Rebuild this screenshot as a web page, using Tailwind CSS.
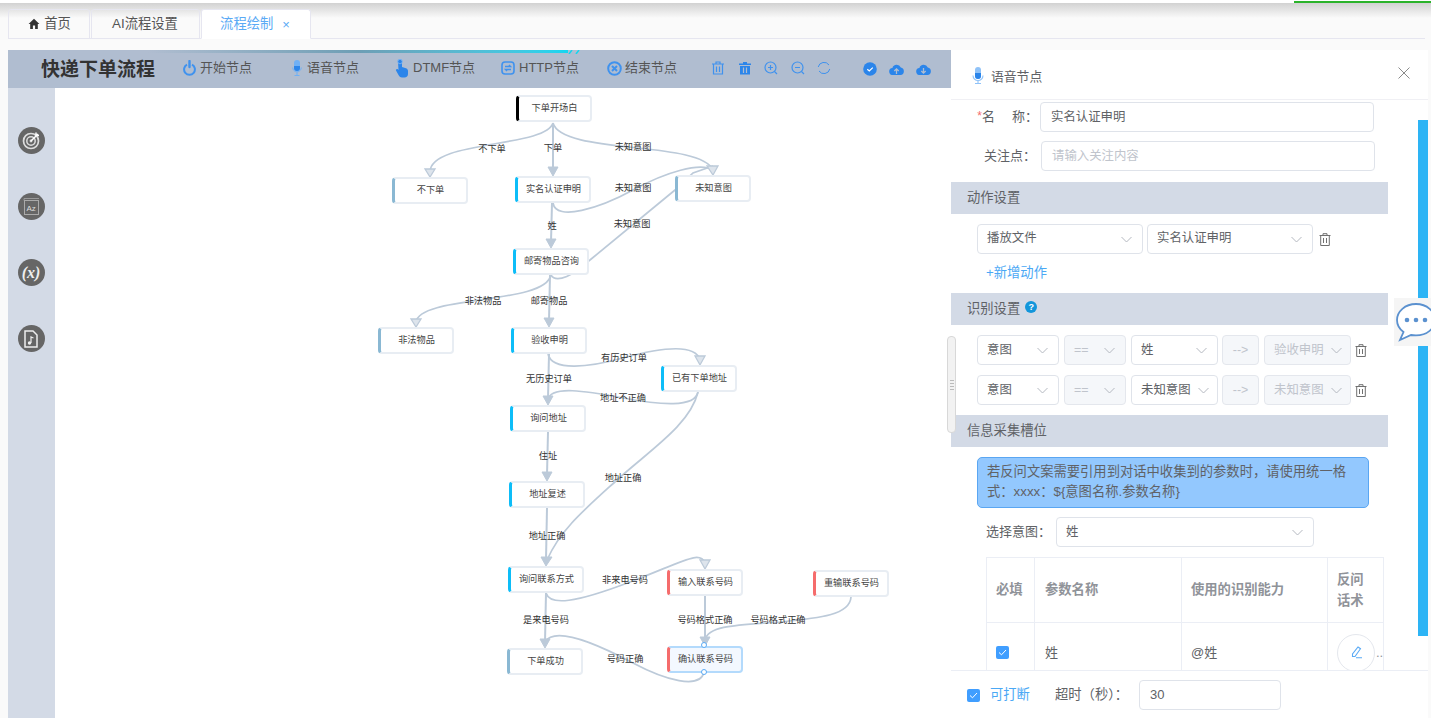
<!DOCTYPE html>
<html lang="zh-CN">
<head>
    <meta charset="UTF-8">
    <title>流程绘制</title>
    <script src="https://cdn.jsdelivr.net/npm/@tailwindcss/browser@4"></script>
</head>
<body class="bg-[#fafafa] h-[718px] w-[1431px] overflow-hidden relative font-['Liberation_Sans','Noto_Sans_CJK_SC',sans-serif] text-[#606266]">
    <!-- top shadow and loading bar -->
    <div class="h-[15px] bg-gradient-to-b from-[#d2d2d2] to-[#fafafa] absolute top-[3px] left-0 right-0"></div>
    <div class="h-[3px] bg-white absolute top-0 left-0 right-0"></div>
    <div class="h-[2px] w-[137px] bg-[#2bb32b] absolute top-[1px] right-0"></div>

    <!-- tabs -->
    <div class="relative h-[39px] pt-[9px] pl-[8px] pr-[6px]">
        <div class="flex h-[30px] border-b border-[#e6e6f0] gap-[1px] text-[13.3px]">
            <div class="w-[82px] h-[30px] border border-[#e6e6f0] rounded-t-[3px] flex items-center justify-center gap-[4px] text-[#555] pl-[1px]">
                <svg width="12" height="12" viewBox="0 0 12 12"><path d="M6 .8 .6 6h1.600v5h2.700V7.600h2.200V11h2.700V6h1.600z" fill="#333"/></svg>
                <span>首页</span>
            </div>
            <div class="w-[109px] h-[30px] border border-[#e6e6f0] rounded-t-[3px] flex items-center justify-center text-[#555] pr-[1px]">AI流程设置</div>
            <div class="w-[110px] h-[30px] border border-[#e6e6f0] border-b-white bg-white rounded-t-[3px] flex items-center justify-center gap-[9px] text-[#5aaaf5] pr-[2px]">
                <span>流程绘制</span><span class="text-[13px] leading-none">×</span>
            </div>
        </div>
    </div>

    <!-- main -->
    <div class="flex pl-[8px] pt-[11px] h-[679px]">
        <!-- flow editor -->
        <div class="w-[943px] flex flex-col relative">
            <div class="absolute top-0 left-[140px] w-[420px] h-[3px] bg-gradient-to-r from-[#b0bdd0] via-[#6d9eb5] to-[#12d6f0]"></div>
            <svg class="absolute top-0 left-[560px]" width="14" height="4"><path d="M1 4 4 0M8 4l3-4" stroke="#12d6f0" stroke-width="1.500"/></svg>
            <div class="h-[38px] bg-[#b0bdd0] flex items-center text-[13px] text-[#555] shrink-0 pb-[2px]">
                <div class="ml-[33px] w-[142px] text-[19px] font-bold text-[#333] leading-none mt-[2px]">快递下单流程</div>
                <div class="flex items-center gap-[4px] w-[107px]">
                    <svg width="13" height="16" viewBox="0 0 13 16"><path d="M4 4.600a5.400 5.400 0 1 0 5 0" fill="none" stroke="#3f92ee" stroke-width="2"/><path d="M6.500 1v6" stroke="#3f92ee" stroke-width="2.400" stroke-linecap="round"/></svg>
                    <span>开始节点</span>
                </div>
                <div class="flex items-center gap-[5px] w-[105px] pl-[2px]">
                    <svg width="10" height="18" viewBox="0 0 10 18"><rect x="2" y="1" width="6" height="11" rx="3" fill="#6fb0f5"/><path d="M2 7h6v2a3 3 0 0 1-6 0z" fill="#2b85ea"/><path d="M.7 8.500a4.300 4.300 0 0 0 8.600 0M5 13v3M2.500 16.500h5" fill="none" stroke="#6fb0f5" stroke-width="1"/></svg>
                    <span>语音节点</span>
                </div>
                <div class="flex items-center gap-[4px] w-[106px]">
                    <svg width="14" height="19" viewBox="0 0 14 19"><path d="M3 2.500a2 2 0 0 1 4 0V8l4 1.200c1.500.5 2 1.500 2 3V15c0 2-1.400 3.500-3.500 3.500H7c-1.500 0-2.500-.7-3.200-2L1 11.500c-.5-1 .8-2 1.800-1.200l.7.700z" fill="#2b85ea"/><circle cx="5" cy="2.500" r="2.300" fill="none" stroke="#6fb0f5"/></svg>
                    <span>DTMF节点</span>
                </div>
                <div class="flex items-center gap-[4px] w-[106px]">
                    <svg width="14" height="14" viewBox="0 0 14 14"><rect x="1" y="1" width="12" height="12" rx="3" fill="none" stroke="#3f92ee" stroke-width="1.600"/><path d="M4 5.500h5.500L8 4M10 8.500H4.500L6 10" fill="none" stroke="#3f92ee" stroke-width="1.400"/></svg>
                    <span>HTTP节点</span>
                </div>
                <div class="flex items-center gap-[3px] w-[105px]">
                    <svg width="15" height="15" viewBox="0 0 15 15"><circle cx="7.500" cy="7.500" r="6.300" fill="none" stroke="#3f92ee" stroke-width="2"/><path d="m5 5 5 5m0-5-5 5" stroke="#3f92ee" stroke-width="2"/></svg>
                    <span>结束节点</span>
                </div>
                <div class="flex items-center gap-[12.500px] ml-[-1px]">
                    <svg width="14" height="14" viewBox="0 0 14 14"><path d="M1 3h12M5 3V1h4v2M2.500 3v10h9V3M5.500 5.500V11M8.500 5.500V11" fill="none" stroke="#3f92ee" stroke-width="1.200"/></svg>
                    <svg width="14" height="14" viewBox="0 0 14 14"><path d="M5 1h4v1.500h4V4H1V2.500h4zM2 5h10v8.500H2z" fill="#2b85ea"/><path d="M5.500 6.500V12M8.500 6.500V12" stroke="#b0bdd0" stroke-width="1.200"/></svg>
                    <svg width="14" height="14" viewBox="0 0 14 14"><circle cx="6.500" cy="6.500" r="5.500" fill="none" stroke="#3f92ee" stroke-width="1.200"/><path d="M4 6.500h5M6.500 4v5M10.500 10.500 13 13" stroke="#3f92ee" stroke-width="1.200"/></svg>
                    <svg width="14" height="14" viewBox="0 0 14 14"><circle cx="6.500" cy="6.500" r="5.500" fill="none" stroke="#3f92ee" stroke-width="1.200"/><path d="M4 6.500h5M10.500 10.500 13 13" stroke="#3f92ee" stroke-width="1.200"/></svg>
                    <svg width="14" height="14" viewBox="0 0 14 14"><path d="M1.200 6A6 6 0 0 1 12 4M12.800 8A6 6 0 0 1 2 10" fill="none" stroke="#3f92ee" stroke-width="1"/></svg>
                </div>
                <div class="flex items-center gap-[12px] ml-[32px] mt-[2px]">
                    <svg width="14" height="14" viewBox="0 0 14 14"><circle cx="7" cy="7" r="6.800" fill="#2b85ea"/><path d="m4.300 7.200 2 1.800 3.500-3.400" fill="none" stroke="#fff" stroke-width="1.200"/></svg>
                    <svg width="15" height="11" viewBox="0 0 15 11"><path d="M4 11a3.500 3.500 0 0 1-.6-7A4.500 4.500 0 0 1 11.800 3.500 3.800 3.800 0 0 1 11.500 11z" fill="#2b85ea"/><path d="M7.500 10V5.500M5.300 7l2.200-2.200L9.700 7" fill="none" stroke="#b0bdd0" stroke-width="1.300"/></svg>
                    <svg width="15" height="11" viewBox="0 0 15 11"><path d="M4 11a3.500 3.500 0 0 1-.6-7A4.500 4.500 0 0 1 11.800 3.500 3.800 3.800 0 0 1 11.500 11z" fill="#2b85ea"/><path d="M7.500 4v4.500M5.300 7l2.200 2.200L9.700 7" fill="none" stroke="#b0bdd0" stroke-width="1.300"/></svg>
                </div>
            </div>
            <div class="flex flex-1 min-h-0">
                <!-- left rail -->
                <div class="w-[47px] bg-[#d3dae6] shrink-0 flex flex-col items-center pt-[39px] gap-[39px] pr-[1px]">
                    <div class="w-[27px] h-[27px] rounded-full bg-[#666] flex items-center justify-center">
                        <svg width="19" height="19" viewBox="0 0 19 19"><circle cx="9" cy="10" r="7.500" fill="none" stroke="#ddd" stroke-width="1.700"/><circle cx="9" cy="10" r="4.200" fill="none" stroke="#ddd" stroke-width="1.500"/><circle cx="9" cy="10" r="1.400" fill="#ddd"/><path d="M9 10 16 3M14 1.500V4.500H17" fill="none" stroke="#fff" stroke-width="1.500"/></svg>
                    </div>
                    <div class="w-[27px] h-[27px] rounded-full bg-[#666] flex items-center justify-center">
                        <svg width="17" height="19" viewBox="0 0 17 19"><path d="M1 3.500V1.500h15" fill="none" stroke="#999" stroke-width="1"/><rect x="1.500" y="3.500" width="14" height="14" fill="none" stroke="#aaa" stroke-width="1"/><text x="3.500" y="13.500" font-size="8" fill="#ddd">Az</text></svg>
                    </div>
                    <div class="w-[27px] h-[27px] rounded-full bg-[#666] flex items-center justify-center text-[#eee] text-[16px] font-bold italic font-['Liberation_Serif',serif] leading-none">(x)</div>
                    <div class="w-[27px] h-[27px] rounded-full bg-[#666] flex items-center justify-center">
                        <svg width="14" height="18" viewBox="0 0 14 18"><path d="M1 1h8l4 4v12H1z" fill="none" stroke="#eee" stroke-width="1.500"/><path d="M7 13V7l2.500 1" fill="none" stroke="#eee" stroke-width="1.200"/><circle cx="5.500" cy="13" r="1.700" fill="#eee"/></svg>
                    </div>
                </div>
                <!-- canvas: nodes are placed on a free canvas -->
                <div class="relative flex-1 bg-white overflow-hidden">
                    <svg class="absolute left-0 top-0" width="896" height="630" viewBox="55 88 896 630" fill="none" stroke="#bccad9" stroke-width="1.700">
                        <path d="M553 123C545 148 430 140 430 172"/>
                        <path d="M553 123V170" stroke-width="2"/>
                        <path d="M553 123C562 155 700 140 713 170"/>
                        <path d="M553 203C556 222 600 208 633 190S700 162 713 170"/>
                        <path d="M551 275C556 284 575 275 590 260L675 190 693 173 713 166"/>
                        <path d="M552 203 551 242" stroke-width="2"/>
                        <path d="M551 275C545 305 420 295 416 322"/>
                        <path d="M550 275 549 321" stroke-width="2"/>
                        <path d="M549 354 548 399" stroke-width="2"/>
                        <path d="M548 354C552 372 590 367 623 358S695 342 700 360"/>
                        <path d="M698 392C695 408 660 405 623 398S550 385 548 400"/>
                        <path d="M698 392C690 425 650 450 617 480S560 530 547 560"/>
                        <path d="M548 432 547 475" stroke-width="2"/>
                        <path d="M547 508 546 560" stroke-width="2"/>
                        <path d="M546 593C550 606 575 603 630 582S700 550 705 563"/>
                        <path d="M546 593 545 642" stroke-width="2"/>
                        <path d="M705 596V640" stroke-width="2"/>
                        <path d="M851 597C850 615 820 618 780 622 740 625 708 625 705 640"/>
                        <path d="M704 672C700 690 665 680 633 663S555 625 545 642"/>
                        <g fill="#dde4ec" stroke-width="1.300">
                            <path d="M425 169H435L430 177Z"/>
                            <path d="M707 166H718L713 175Z"/>
                            <path d="M411 319H421L416 327Z"/>
                            <path d="M695 356H705L700 365Z"/>
                            <path d="M700 560H710L705 569Z"/>
                        </g>
                        <g fill="#bccad9" stroke-width="1">
                            <path d="M548 167H558L553 176Z"/>
                            <path d="M546 239H556L551 248Z"/>
                            <path d="M544 318H554L549 327Z"/>
                            <path d="M543 396H553L548 405Z"/>
                            <path d="M542 472H552L547 481Z"/>
                            <path d="M541 557H552L546 566Z"/>
                            <path d="M540 639H550L545 648Z"/>
                            <path d="M700 637H710L705 646Z"/>
                        </g>
                    </svg>

                    <!-- nodes -->
                    <div class="absolute left-[461px] top-[7px] w-[76px] h-[27px] bg-white border-2 border-[#e8edf3] border-l-[3px] border-l-black rounded-[4px] flex items-center justify-center text-[9.200px] text-[#444]">下单开场白</div>
                    <div class="absolute left-[337px] top-[89px] w-[76px] h-[27px] bg-white border-2 border-[#e8edf3] border-l-[3px] border-l-[#8ab8d3] rounded-[4px] flex items-center justify-center text-[9.200px] text-[#444]">不下单</div>
                    <div class="absolute left-[460px] top-[88px] w-[76px] h-[27px] bg-white border-2 border-[#e8edf3] border-l-[3px] border-l-[#0dbdf8] rounded-[4px] flex items-center justify-center text-[9.200px] text-[#444]">实名认证申明</div>
                    <div class="absolute left-[620px] top-[87px] w-[76px] h-[27px] bg-white border-2 border-[#e8edf3] border-l-[3px] border-l-[#8ab8d3] rounded-[4px] flex items-center justify-center text-[9.200px] text-[#444]">未知意图</div>
                    <div class="absolute left-[458px] top-[160px] w-[76px] h-[27px] bg-white border-2 border-[#e8edf3] border-l-[3px] border-l-[#0dbdf8] rounded-[4px] flex items-center justify-center text-[9.200px] text-[#444]">邮寄物品咨询</div>
                    <div class="absolute left-[323px] top-[239px] w-[76px] h-[27px] bg-white border-2 border-[#e8edf3] border-l-[3px] border-l-[#8ab8d3] rounded-[4px] flex items-center justify-center text-[9.200px] text-[#444]">非法物品</div>
                    <div class="absolute left-[456px] top-[239px] w-[76px] h-[27px] bg-white border-2 border-[#e8edf3] border-l-[3px] border-l-[#0dbdf8] rounded-[4px] flex items-center justify-center text-[9.200px] text-[#444]">验收申明</div>
                    <div class="absolute left-[606px] top-[277px] w-[76px] h-[27px] bg-white border-2 border-[#e8edf3] border-l-[3px] border-l-[#0dbdf8] rounded-[4px] flex items-center justify-center text-[9.200px] text-[#444]">已有下单地址</div>
                    <div class="absolute left-[455px] top-[317px] w-[76px] h-[27px] bg-white border-2 border-[#e8edf3] border-l-[3px] border-l-[#0dbdf8] rounded-[4px] flex items-center justify-center text-[9.200px] text-[#444]">询问地址</div>
                    <div class="absolute left-[454px] top-[393px] w-[76px] h-[27px] bg-white border-2 border-[#e8edf3] border-l-[3px] border-l-[#0dbdf8] rounded-[4px] flex items-center justify-center text-[9.200px] text-[#444]">地址复述</div>
                    <div class="absolute left-[453px] top-[478px] w-[76px] h-[27px] bg-white border-2 border-[#e8edf3] border-l-[3px] border-l-[#0dbdf8] rounded-[4px] flex items-center justify-center text-[9.200px] text-[#444]">询问联系方式</div>
                    <div class="absolute left-[612px] top-[481px] w-[76px] h-[27px] bg-white border-2 border-[#e8edf3] border-l-[3px] border-l-[#f56c6c] rounded-[4px] flex items-center justify-center text-[9.200px] text-[#444]">输入联系号码</div>
                    <div class="absolute left-[758px] top-[482px] w-[76px] h-[27px] bg-white border-2 border-[#e8edf3] border-l-[3px] border-l-[#f56c6c] rounded-[4px] flex items-center justify-center text-[9.200px] text-[#444]">重输联系号码</div>
                    <div class="absolute left-[452px] top-[560px] w-[76px] h-[27px] bg-white border-2 border-[#e8edf3] border-l-[3px] border-l-[#8ab8d3] rounded-[4px] flex items-center justify-center text-[9.200px] text-[#444]">下单成功</div>
                    <div class="absolute left-[612px] top-[558px] w-[76px] h-[27px] bg-[#f3f8ff] border-2 border-[#b3dafc] border-l-[3px] border-l-[#f56c6c] rounded-[4px] flex items-center justify-center text-[9.200px] text-[#444]">确认联系号码</div>
                    <div class="absolute left-[646px] top-[554px] w-[6px] h-[6px] rounded-full bg-white border border-[#5aaaf5]"></div>
                    <div class="absolute left-[646px] top-[581px] w-[6px] h-[6px] rounded-full bg-white border border-[#5aaaf5]"></div>

                    <!-- edge labels -->
                    <div class="absolute left-0 top-[1px] w-full h-full">
                    <span class="absolute left-[437px] top-[61px] -translate-x-1/2 -translate-y-1/2 text-[9.200px] text-[#333] whitespace-nowrap">不下单</span>
                    <span class="absolute left-[498px] top-[60px] -translate-x-1/2 -translate-y-1/2 text-[9.200px] text-[#333] whitespace-nowrap">下单</span>
                    <span class="absolute left-[578px] top-[59px] -translate-x-1/2 -translate-y-1/2 text-[9.200px] text-[#333] whitespace-nowrap">未知意图</span>
                    <span class="absolute left-[578px] top-[100px] -translate-x-1/2 -translate-y-1/2 text-[9.200px] text-[#333] whitespace-nowrap">未知意图</span>
                    <span class="absolute left-[577px] top-[136px] -translate-x-1/2 -translate-y-1/2 text-[9.200px] text-[#333] whitespace-nowrap">未知意图</span>
                    <span class="absolute left-[497px] top-[138px] -translate-x-1/2 -translate-y-1/2 text-[9.200px] text-[#333] whitespace-nowrap">姓</span>
                    <span class="absolute left-[428px] top-[213px] -translate-x-1/2 -translate-y-1/2 text-[9.200px] text-[#333] whitespace-nowrap">非法物品</span>
                    <span class="absolute left-[494px] top-[213px] -translate-x-1/2 -translate-y-1/2 text-[9.200px] text-[#333] whitespace-nowrap">邮寄物品</span>
                    <span class="absolute left-[569px] top-[270px] -translate-x-1/2 -translate-y-1/2 text-[9.200px] text-[#333] whitespace-nowrap">有历史订单</span>
                    <span class="absolute left-[494px] top-[291px] -translate-x-1/2 -translate-y-1/2 text-[9.200px] text-[#333] whitespace-nowrap">无历史订单</span>
                    <span class="absolute left-[568px] top-[310px] -translate-x-1/2 -translate-y-1/2 text-[9.200px] text-[#333] whitespace-nowrap">地址不正确</span>
                    <span class="absolute left-[493px] top-[368px] -translate-x-1/2 -translate-y-1/2 text-[9.200px] text-[#333] whitespace-nowrap">住址</span>
                    <span class="absolute left-[568px] top-[390px] -translate-x-1/2 -translate-y-1/2 text-[9.200px] text-[#333] whitespace-nowrap">地址正确</span>
                    <span class="absolute left-[492px] top-[448px] -translate-x-1/2 -translate-y-1/2 text-[9.200px] text-[#333] whitespace-nowrap">地址正确</span>
                    <span class="absolute left-[570px] top-[492px] -translate-x-1/2 -translate-y-1/2 text-[9.200px] text-[#333] whitespace-nowrap">非来电号码</span>
                    <span class="absolute left-[491px] top-[532px] -translate-x-1/2 -translate-y-1/2 text-[9.200px] text-[#333] whitespace-nowrap">是来电号码</span>
                    <span class="absolute left-[650px] top-[532px] -translate-x-1/2 -translate-y-1/2 text-[9.200px] text-[#333] whitespace-nowrap">号码格式正确</span>
                    <span class="absolute left-[723px] top-[532px] -translate-x-1/2 -translate-y-1/2 text-[9.200px] text-[#333] whitespace-nowrap">号码格式正确</span>
                    <span class="absolute left-[570px] top-[571px] -translate-x-1/2 -translate-y-1/2 text-[9.200px] text-[#333] whitespace-nowrap">号码正确</span>
                    </div>
                </div>
            </div>
        </div>

        <!-- node panel -->
        <div class="w-[477px] bg-white flex flex-col shrink-0 relative text-[12.400px]">
            <div class="h-[50px] border-b border-[#f0f0f4] flex items-center pl-[21px] relative shrink-0">
                <svg class="mt-[2px]" width="12" height="19" viewBox="0 0 12 19"><rect x="3" y="1" width="6" height="12" rx="3" fill="#8fc2f8"/><path d="M3 7h6v3a3 3 0 0 1-6 0z" fill="#2b85ea"/><path d="M1 9.500a5 5 0 0 0 10 0M6 14.500V17M3 17.500h6" fill="none" stroke="#8fc2f8" stroke-width="1.100"/></svg>
                <span class="ml-[7px] mt-[5px] text-[12.800px] text-[#606266]">语音节点</span>
                <svg class="absolute left-[447px] top-[17px]" width="12" height="12" viewBox="0 0 12 12"><path d="m.5.500 11 11m0-11-11 11" stroke="#8a8a8a" stroke-width="1"/></svg>
            </div>

            <div class="h-[570px] overflow-hidden relative shrink-0">
                <div class="flex items-center h-[30px] mt-[2px]">
                    <div class="w-[89px] flex justify-end pr-[2px] text-[#606266] text-[13px] leading-none pb-[2px]"><span class="text-[#f56c6c] text-[12px]">*</span>名<span class="w-[17px]"></span>称：</div>
                    <div class="w-[334px] h-[30px] border border-[#dfe3ea] rounded-[4px] flex items-center pl-[10px]">实名认证申明</div>
                </div>
                <div class="flex items-center h-[30px] mt-[9px]">
                    <div class="w-[90px] flex justify-end pr-[5px] text-[#606266] text-[13px] leading-none pb-[2px]">关注点：</div>
                    <div class="w-[334px] h-[30px] border border-[#dfe3ea] rounded-[4px] flex items-center pl-[10px] text-[#c0c4cc]">请输入关注内容</div>
                </div>

                <div class="w-[437px] h-[32px] mt-[11px] bg-[#d3dae6] flex items-center pl-[16px] pb-[1px] text-[13.300px] text-[#606266]">动作设置</div>
                <div class="flex items-center h-[30px] mt-[10px] ml-[26px] gap-[4px]">
                    <div class="w-[166px] h-[30px] border border-[#dfe3ea] rounded-[4px] flex items-center justify-between pl-[9px] pr-[10px]">
                        <span class="mb-[1px]">播放文件</span>
                        <svg width="11" height="7" viewBox="0 0 11 7"><path d="m.5 1 5 5 5-5" fill="none" stroke="#b4b8c0"/></svg>
                    </div>
                    <div class="w-[166px] h-[30px] border border-[#dfe3ea] rounded-[4px] flex items-center justify-between pl-[9px] pr-[10px]">
                        <span class="mb-[1px]">实名认证申明</span>
                        <svg width="11" height="7" viewBox="0 0 11 7"><path d="m.5 1 5 5 5-5" fill="none" stroke="#b4b8c0"/></svg>
                    </div>
                    <svg class="ml-[2px]" width="12" height="13" viewBox="0 0 12 13"><path d="M.5 2.500h11M4 2.500V.7h4v1.800M1.700 2.500v10h8.600v-10M4.500 5v5M7.500 5v5" fill="none" stroke="#707070"/></svg>
                </div>
                <div class="h-[19px] mt-[10px] ml-[35px] text-[13.300px] leading-[17px] text-[#4aa8f5]">+新增动作</div>

                <div class="w-[437px] h-[32px] mt-[10px] bg-[#d3dae6] flex items-center pl-[16px] text-[13.300px] text-[#606266] gap-[5px]">
                    <span>识别设置</span>
                    <span class="w-[12px] h-[12px] rounded-full bg-[#1296db] text-white text-[9px] leading-[12px] text-center font-bold mt-[-4px]">?</span>
                </div>
                <div class="flex items-center h-[30px] mt-[10px] ml-[26px]">
                    <div class="w-[82px] h-[30px] border border-[#dfe3ea] rounded-[4px] flex items-center justify-between pl-[9px] pr-[10px]">
                        <span>意图</span>
                        <svg width="11" height="7" viewBox="0 0 11 7"><path d="m.5 1 5 5 5-5" fill="none" stroke="#b4b8c0"/></svg>
                    </div>
                    <div class="w-[62px] h-[30px] ml-[5px] bg-[#f5f7fa] border border-[#e4e7ed] rounded-[4px] flex items-center justify-between pl-[9px] pr-[10px] text-[#c0c4cc]">
                        <span>==</span>
                        <svg width="11" height="7" viewBox="0 0 11 7"><path d="m.5 1 5 5 5-5" fill="none" stroke="#b4b8c0"/></svg>
                    </div>
                    <div class="w-[87px] h-[30px] ml-[5px] border border-[#dfe3ea] rounded-[4px] flex items-center justify-between pl-[9px] pr-[10px]">
                        <span>姓</span>
                        <svg width="11" height="7" viewBox="0 0 11 7"><path d="m.5 1 5 5 5-5" fill="none" stroke="#b4b8c0"/></svg>
                    </div>
                    <div class="w-[37px] h-[30px] ml-[4px] bg-[#f5f7fa] border border-[#e4e7ed] rounded-[4px] flex items-center justify-center text-[#c0c4cc]">--&gt;</div>
                    <div class="w-[87px] h-[30px] ml-[5px] bg-[#f5f7fa] border border-[#e4e7ed] rounded-[4px] flex items-center pl-[9px] pr-[8px] gap-[7px] text-[#c0c4cc]">
                        <span class="w-[50px] overflow-hidden whitespace-nowrap shrink-0">验收申明</span>
                        <svg class="shrink-0" width="11" height="7" viewBox="0 0 11 7"><path d="m.5 1 5 5 5-5" fill="none" stroke="#b4b8c0"/></svg>
                    </div>
                    <svg class="ml-[4px]" width="12" height="13" viewBox="0 0 12 13"><path d="M.5 2.500h11M4 2.500V.7h4v1.800M1.700 2.500v10h8.600v-10M4.500 5v5M7.500 5v5" fill="none" stroke="#707070"/></svg>
                </div>
                <div class="flex items-center h-[30px] mt-[10px] ml-[26px]">
                    <div class="w-[82px] h-[30px] border border-[#dfe3ea] rounded-[4px] flex items-center justify-between pl-[9px] pr-[10px]">
                        <span>意图</span>
                        <svg width="11" height="7" viewBox="0 0 11 7"><path d="m.5 1 5 5 5-5" fill="none" stroke="#b4b8c0"/></svg>
                    </div>
                    <div class="w-[62px] h-[30px] ml-[5px] bg-[#f5f7fa] border border-[#e4e7ed] rounded-[4px] flex items-center justify-between pl-[9px] pr-[10px] text-[#c0c4cc]">
                        <span>==</span>
                        <svg width="11" height="7" viewBox="0 0 11 7"><path d="m.5 1 5 5 5-5" fill="none" stroke="#b4b8c0"/></svg>
                    </div>
                    <div class="w-[87px] h-[30px] ml-[5px] border border-[#dfe3ea] rounded-[4px] flex items-center pl-[9px] pr-[8px] gap-[7px]">
                        <span class="w-[50px] overflow-hidden whitespace-nowrap shrink-0">未知意图</span>
                        <svg class="shrink-0" width="11" height="7" viewBox="0 0 11 7"><path d="m.5 1 5 5 5-5" fill="none" stroke="#b4b8c0"/></svg>
                    </div>
                    <div class="w-[37px] h-[30px] ml-[4px] bg-[#f5f7fa] border border-[#e4e7ed] rounded-[4px] flex items-center justify-center text-[#c0c4cc]">--&gt;</div>
                    <div class="w-[87px] h-[30px] ml-[5px] bg-[#f5f7fa] border border-[#e4e7ed] rounded-[4px] flex items-center pl-[9px] pr-[8px] gap-[7px] text-[#c0c4cc]">
                        <span class="w-[50px] overflow-hidden whitespace-nowrap shrink-0">未知意图</span>
                        <svg class="shrink-0" width="11" height="7" viewBox="0 0 11 7"><path d="m.5 1 5 5 5-5" fill="none" stroke="#b4b8c0"/></svg>
                    </div>
                    <svg class="ml-[4px]" width="12" height="13" viewBox="0 0 12 13"><path d="M.5 2.500h11M4 2.500V.7h4v1.800M1.700 2.500v10h8.600v-10M4.500 5v5M7.500 5v5" fill="none" stroke="#707070"/></svg>
                </div>

                <div class="w-[437px] h-[32px] mt-[10px] bg-[#d3dae6] flex items-center pl-[16px] text-[13.300px] text-[#606266]">信息采集槽位</div>
                <div class="w-[392px] h-[51px] mt-[10px] ml-[26px] bg-[#93c8fe] border border-[#5aa6f2] rounded-[5px] px-[9px] pt-[4px] text-[13.300px] leading-[20px] text-[#606266]">若反问文案需要引用到对话中收集到的参数时，请使用统一格式：xxxx：${意图名称.参数名称}</div>
                <div class="flex items-center h-[30px] mt-[9px] ml-[35px]">
                    <span class="w-[70px] text-[13px] text-[#606266]">选择意图：</span>
                    <div class="w-[258px] h-[30px] border border-[#dfe3ea] rounded-[4px] flex items-center justify-between pl-[9px] pr-[10px]">
                        <span>姓</span>
                        <svg width="11" height="7" viewBox="0 0 11 7"><path d="m.5 1 5 5 5-5" fill="none" stroke="#b4b8c0"/></svg>
                    </div>
                </div>

                <table class="mt-[10px] ml-[35px] w-[398px] table-fixed border-collapse text-[13px]">
                    <tr class="h-[65px] text-[13.300px] text-[#909399]">
                        <th class="w-[48px] border border-[#ebeef5] font-bold text-left pl-[9px]">必填</th>
                        <th class="w-[147px] border border-[#ebeef5] font-bold text-left pl-[10px]">参数名称</th>
                        <th class="w-[146px] border border-[#ebeef5] font-bold text-left pl-[9px]">使用的识别能力</th>
                        <th class="border border-[#ebeef5] font-bold text-left pl-[9px] leading-[21px]">反问<br>话术</th>
                    </tr>
                    <tr class="h-[60px]">
                        <td class="border border-[#ebeef5] pl-[9px]">
                            <div class="w-[13px] h-[13px] bg-[#409eff] rounded-[2px] flex items-center justify-center">
                                <svg width="9" height="7" viewBox="0 0 9 7"><path d="m1 3.500 2.500 2.300L8 1" fill="none" stroke="#fff" stroke-width="1"/></svg>
                            </div>
                        </td>
                        <td class="border border-[#ebeef5] pl-[10px]">姓</td>
                        <td class="border border-[#ebeef5] pl-[9px]">@姓</td>
                        <td class="border border-[#ebeef5] pl-[9px]">
                            <div class="flex items-center">
                                <div class="w-[38px] h-[38px] rounded-full border border-[#e4e7ed] flex items-center justify-center shrink-0">
                                    <svg width="13" height="13" viewBox="0 0 13 13"><path d="M8 1 10.500 2.700 5 10.500H2.500V8zM6 11.800H12" fill="none" stroke="#5aaaf5" stroke-width="1.100"/></svg>
                                </div>
                                <span class="ml-[1px] text-[#909399] leading-none">..</span>
                            </div>
                        </td>
                    </tr>
                </table>
            </div>

            <div class="h-[49px] border-t border-[#ebeef5] flex items-center pl-[16px] shrink-0 text-[13px] bg-white">
                <div class="w-[13px] h-[13px] bg-[#409eff] rounded-[2px] flex items-center justify-center">
                    <svg width="9" height="7" viewBox="0 0 9 7"><path d="m1 3.500 2.500 2.300L8 1" fill="none" stroke="#fff" stroke-width="1"/></svg>
                </div>
                <span class="ml-[10px] w-[40px] text-[13.300px] text-[#4aa8f5]">可打断</span>
                <span class="ml-[25px] w-[84px] text-[13.300px] whitespace-nowrap">超时（秒）：</span>
                <div class="w-[142px] h-[30px] border border-[#dfe3ea] rounded-[4px] flex items-center pl-[10px]">30</div>
            </div>

            <!-- overlays: scrollbar, drag handle, chat bubble -->
            <div class="absolute left-[467px] top-[70px] w-[10px] h-[516px] bg-[#2db4f5]"></div>
            <div class="absolute left-[-4px] top-[286px] w-[9px] h-[97px] bg-[#f2f2f2] border border-[#d8d8d8] rounded-[4px] flex flex-col items-center justify-center gap-[2px]">
                <div class="w-[4px] h-[1px] bg-[#bbb]"></div>
                <div class="w-[4px] h-[1px] bg-[#bbb]"></div>
                <div class="w-[4px] h-[1px] bg-[#bbb]"></div>
                <div class="w-[4px] h-[1px] bg-[#bbb]"></div>
            </div>
            <div class="absolute left-[443px] top-[248px] w-[38px] h-[48px] bg-[#f5f5f5] overflow-hidden">
                <svg class="absolute left-[2px] top-[4px]" width="44" height="40" viewBox="0 0 44 40"><path d="M20 2C9 2 1 9.500 1 18c0 5 2.500 9 6.500 12L4 38l11-5c1.500.3 3.300.4 5 .4 11 0 19-7 19-15.400S31 2 20 2z" fill="#fff" stroke="#5b91cf" stroke-width="1.800"/><circle cx="11" cy="18" r="2.300" fill="#5b91cf"/><circle cx="20" cy="18" r="2.300" fill="#5b91cf"/><circle cx="29" cy="18" r="2.300" fill="#5b91cf"/></svg>
            </div>
        </div>
    </div>
</body>
</html>
